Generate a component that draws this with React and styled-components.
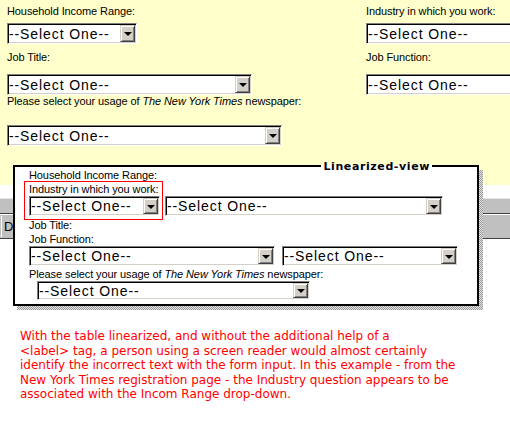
import React from "react";
import styled, { createGlobalStyle } from "styled-components";

const Global = createGlobalStyle`
  html, body { margin: 0; padding: 0; background: #fff; }
`;

const Page = styled.div`
  position: relative;
  width: 510px;
  height: 433px;
  overflow: hidden;
  background: #fff;
  font-family: "Liberation Sans", Arial, sans-serif;
  color: #000;
`;

const YellowForm = styled.div`
  height: 185px;
  background: #ffffcc;
  display: grid;
  grid-template-columns: 359px 1fr;
  padding: 5px 0 0 7px;
  box-sizing: border-box;
`;

const Column = styled.div`
  display: flex;
  flex-direction: column;
  min-width: 0;
`;

const Field = styled.div`
  display: flex;
  flex-direction: column;
  margin-top: ${(p) => p.$top || 0}px;
`;

const FormLabel = styled.div`
  font-size: 11px;
  line-height: 13px;
  letter-spacing: -0.1px;
  white-space: nowrap;
  margin-bottom: ${(p) => p.$gap || 0}px;
`;

const SelectBox = styled.div`
  display: flex;
  align-items: stretch;
  box-sizing: border-box;
  flex-shrink: 0;
  width: ${(p) => p.$w}px;
  height: ${(p) => p.$h || 21}px;
  margin-left: ${(p) => p.$ml || 0}px;
  padding: 1px;
  background: #fff;
  border-style: solid;
  border-width: 1px;
  border-color: #808080 #ffffff #ffffff #808080;
  box-shadow: inset 1px 1px 0 #000, inset -1px -1px 0 #d4d0c8;
`;

const SelectText = styled.div`
  flex: 1;
  display: flex;
  align-items: center;
  font-family: "Liberation Sans", Arial, sans-serif;
  font-size: 14px;
  letter-spacing: 0.9px;
  white-space: nowrap;
  overflow: hidden;
  padding-left: 0;
`;

const ArrowButton = styled.div`
  width: 15px;
  box-sizing: border-box;
  display: flex;
  align-items: center;
  justify-content: center;
  background: #d4d0c8;
  border-style: solid;
  border-width: 1px;
  border-color: #d4d0c8 #404040 #404040 #d4d0c8;
  box-shadow: inset 1px 1px 0 #fff, inset -1px -1px 0 #808080;
  &::after {
    content: "";
    width: 0;
    height: 0;
    border-left: 4px solid transparent;
    border-right: 4px solid transparent;
    border-top: 4px solid #000;
    margin-top: 1px;
  }
`;

function Select({ w, h, ml }) {
  return (
    <SelectBox $w={w} $h={h} $ml={ml}>
      <SelectText>--Select One--</SelectText>
      <ArrowButton />
    </SelectBox>
  );
}

const Toolbars = styled.div`
  padding-top: 13px;
`;

const BarTop = styled.div`
  height: 16px;
  box-sizing: border-box;
  background: #c0c0c0;
  border-top: 1px solid #e4e4e4;
  border-bottom: 1px solid #404040;
`;

const BarBottom = styled.div`
  height: 25px;
  box-sizing: border-box;
  background: #c0c0c0;
  border-top: 1px solid #ffffff;
  border-bottom: 1px solid #404040;
  display: flex;
  align-items: center;
`;

const BarButton = styled.div`
  margin-left: 1px;
  padding: 0 4px 0 2px;
  height: 21px;
  display: flex;
  align-items: center;
  font-size: 13px;
  border-left: 1px solid #fff;
`;

const Note = styled.p`
  margin: 90px 0 0 20px;
  color: #ff0000;
  font-family: "DejaVu Sans", Verdana, sans-serif;
  font-size: 12px;
  letter-spacing: 0;
  line-height: 14.5px;
  white-space: nowrap;
`;

const LinearBox = styled.div`
  position: absolute;
  left: 13px;
  top: 165px;
  width: 466px;
  height: 141px;
  box-sizing: border-box;
  border: 2px solid #000;
  background: #fff;
  padding: 1px 0 0 14px;
  display: flex;
  flex-direction: column;
  &::after {
    content: "";
    position: absolute;
    top: 3px;
    right: -6px;
    bottom: -6px;
    width: 4px;
    background: repeating-conic-gradient(#9a9a9a 0 25%, #e2e2e2 0 50%) 0 0 / 2px 2px;
  }
  &::before {
    content: "";
    position: absolute;
    left: 2px;
    right: -6px;
    bottom: -6px;
    height: 4px;
    background: repeating-conic-gradient(#9a9a9a 0 25%, #e2e2e2 0 50%) 0 0 / 2px 2px;
  }
`;

const Legend = styled.span`
  position: absolute;
  top: -7px;
  right: 45px;
  padding: 0 2px;
  font-family: "DejaVu Sans", Verdana, sans-serif;
  font-weight: bold;
  font-size: 11px;
  letter-spacing: 0.6px;
  line-height: 14px;
  background: linear-gradient(#ffffcc 0 5px, #fff 5px);
`;

const BoxLabel = styled.div`
  font-size: 11px;
  line-height: 14px;
  letter-spacing: -0.1px;
  white-space: nowrap;
  margin-top: ${(p) => p.$top || 0}px;
`;

const BoxRow = styled.div`
  display: flex;
  align-items: flex-end;
`;

const Highlight = styled.div`
  position: relative;
  display: flex;
  flex-direction: column;
  width: 131px;
  &::before {
    content: "";
    position: absolute;
    top: -1px;
    left: -5px;
    right: -3px;
    bottom: -4px;
    border: 1px solid #ff0000;
    pointer-events: none;
  }
`;

const Italic = styled.i`
  font-style: italic;
`;

export default function App() {
  return (
    <Page>
      <Global />
      <YellowForm>
        <Column>
          <Field>
            <FormLabel $gap={5}>Household Income Range:</FormLabel>
            <Select w={130} />
          </Field>
          <Field $top={7}>
            <FormLabel $gap={10}>Job Title:</FormLabel>
            <Select w={245} />
          </Field>
          <Field>
            <FormLabel $gap={17}>
              Please select your usage of <Italic>The New York Times</Italic> newspaper:
            </FormLabel>
            <Select w={275} />
          </Field>
        </Column>
        <Column>
          <Field>
            <FormLabel $gap={5}>Industry in which you work:</FormLabel>
            <Select w={180} />
          </Field>
          <Field $top={7}>
            <FormLabel $gap={10}>Job Function:</FormLabel>
            <Select w={180} />
          </Field>
        </Column>
      </YellowForm>
      <Toolbars>
        <BarTop />
        <BarBottom>
          <BarButton>Do</BarButton>
        </BarBottom>
      </Toolbars>
      <Note>
        With the table linearized, and without the additional help of a
        <br />
        &lt;label&gt; tag, a person using a screen reader would almost certainly
        <br />
        identify the incorrect text with the form input. In this example - from the
        <br />
        New York Times registration page - the Industry question appears to be
        <br />
        associated with the Incom Range drop-down.
      </Note>
      <LinearBox>
        <Legend>Linearized-view</Legend>
        <BoxLabel>Household Income Range:</BoxLabel>
        <BoxRow>
          <Highlight>
            <BoxLabel>Industry in which you work:</BoxLabel>
            <Select w={131} h={20} />
          </Highlight>
          <Select w={278} h={20} ml={5} />
        </BoxRow>
        <BoxLabel $top={2}>Job Title:</BoxLabel>
        <BoxLabel>Job Function:</BoxLabel>
        <BoxRow>
          <Select w={246} h={20} />
          <Select w={176} h={20} ml={7} />
        </BoxRow>
        <BoxLabel $top={1}>
          Please select your usage of <Italic>The New York Times</Italic> newspaper:
        </BoxLabel>
        <Select w={273} h={19} ml={8} />
      </LinearBox>
    </Page>
  );
}
